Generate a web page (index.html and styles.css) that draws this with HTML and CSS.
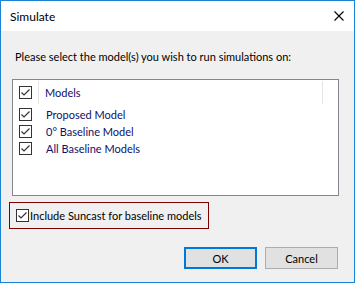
FILE: index.html
```html
<!DOCTYPE html>
<html>
<head>
<meta charset="utf-8">
<link rel="stylesheet" href="styles.css">
</head>
<body>
<div class="window">
  <div class="titlebar">
    <span class="title">Simulate</span>
    <svg class="close" width="10" height="10" viewBox="0 0 10 10"><path d="M0.5 0.5 L9.5 9.5 M9.5 0.5 L0.5 9.5" stroke="#000" stroke-width="1.1" fill="none"/></svg>
  </div>
  <div class="content">
    <p class="prompt">Please select the model(s) you wish to run simulations on:</p>
    <div class="listbox">
      <div class="header">
        <span class="cb"><svg width="13" height="13" viewBox="0 0 13 13"><rect x="0.5" y="0.5" width="12" height="12" fill="#fff" stroke="#333"/><path d="M2.5 6.5 L5 9 L10.5 3.5" stroke="#333" stroke-width="1.2" fill="none"/></svg></span>
        <span class="hdiv"></span>
        <span class="htext">Models</span>
        <span class="hdiv2"></span>
      </div>
      <div class="row"><span class="cb"><svg width="13" height="13" viewBox="0 0 13 13"><rect x="0.5" y="0.5" width="12" height="12" fill="#fff" stroke="#333"/><path d="M2.5 6.5 L5 9 L10.5 3.5" stroke="#333" stroke-width="1.2" fill="none"/></svg></span><span class="rtext">Proposed Model</span></div>
      <div class="row"><span class="cb"><svg width="13" height="13" viewBox="0 0 13 13"><rect x="0.5" y="0.5" width="12" height="12" fill="#fff" stroke="#333"/><path d="M2.5 6.5 L5 9 L10.5 3.5" stroke="#333" stroke-width="1.2" fill="none"/></svg></span><span class="rtext">0° Baseline Model</span></div>
      <div class="row"><span class="cb"><svg width="13" height="13" viewBox="0 0 13 13"><rect x="0.5" y="0.5" width="12" height="12" fill="#fff" stroke="#333"/><path d="M2.5 6.5 L5 9 L10.5 3.5" stroke="#333" stroke-width="1.2" fill="none"/></svg></span><span class="rtext">All Baseline Models</span></div>
    </div>
    <div class="suncast">
      <span class="cb"><svg width="13" height="13" viewBox="0 0 13 13"><rect x="0.5" y="0.5" width="12" height="12" fill="#fff" stroke="#333"/><path d="M2.5 6.5 L5 9 L10.5 3.5" stroke="#333" stroke-width="1.2" fill="none"/></svg></span>
      <span class="stext">Include Suncast for baseline models</span>
    </div>
    <div class="buttons">
      <button class="btn default">OK</button>
      <button class="btn">Cancel</button>
    </div>
  </div>
</div>
</body>
</html>
```
FILE: styles.css
```css
html, body {
  margin: 0;
  padding: 0;
  background: #f0f0f0;
}
body {
  font-family: Lato, "Noto Sans", sans-serif;
  font-size: 11px;
  color: #000;
}
.window {
  width: 355px;
  height: 283px;
  box-sizing: border-box;
  border: 1px solid #1883d7;
  display: flex;
  flex-direction: column;
  background: #f0f0f0;
}
.titlebar {
  height: 30px;
  background: #fff;
  display: flex;
  align-items: center;
  justify-content: space-between;
  padding: 0 10px 0 9px;
  flex: none;
}
.title {
  font-size: 12px;
  color: #000;
}
.close {
  display: block;
}
.content {
  flex: 1;
  display: flex;
  flex-direction: column;
  padding: 0 0 0 11px;
}
.prompt {
  margin: 18px 0 0 3px;
  height: 16px;
  line-height: 16px;
  white-space: nowrap;
}
.listbox {
  margin-top: 14px;
  width: 327px;
  height: 117px;
  box-sizing: border-box;
  border: 1px solid #828790;
  background: #fff;
  color: #10106a;
}
.header {
  height: 24px;
  display: flex;
  align-items: center;
}
.cb {
  display: block;
  width: 13px;
  height: 13px;
  margin-left: 6px;
  flex: none;
}
.cb svg { display: block; }
.hdiv {
  width: 1px;
  height: 23px;
  background: #e5e5e5;
  margin-left: 6px;
  align-self: flex-start;
  margin-top: 1px;
}
.htext {
  margin-left: 6px;
  flex: 1;
}
.hdiv2 {
  width: 1px;
  height: 23px;
  background: #e5e5e5;
  margin-right: 15px;
  align-self: flex-start;
  margin-top: 1px;
}
.row {
  height: 17px;
  display: flex;
  align-items: center;
}
.header + .row { margin-top: 2px; }
.rtext {
  margin-left: 14px;
  white-space: nowrap;
}
.suncast {
  margin-top: 6px;
  margin-left: -3px;
  width: 200px;
  height: 27px;
  box-sizing: border-box;
  border: 1px solid #800000;
  display: flex;
  align-items: center;
}
.suncast .cb {
  margin-left: 6px;
}
.stext {
  margin-left: 1px;
  white-space: nowrap;
}
.buttons {
  display: flex;
  gap: 8px;
  margin-top: 18px;
  padding-left: 172px;
}
.btn {
  width: 73px;
  height: 22px;
  box-sizing: border-box;
  background: #e1e1e1;
  border: 1px solid #adadad;
  font-family: Lato, "Noto Sans", sans-serif;
  font-size: 11px;
  color: #000;
  padding: 0;
  margin: 0;
}
.btn.default {
  border: 2px solid #0078d7;
}
```
